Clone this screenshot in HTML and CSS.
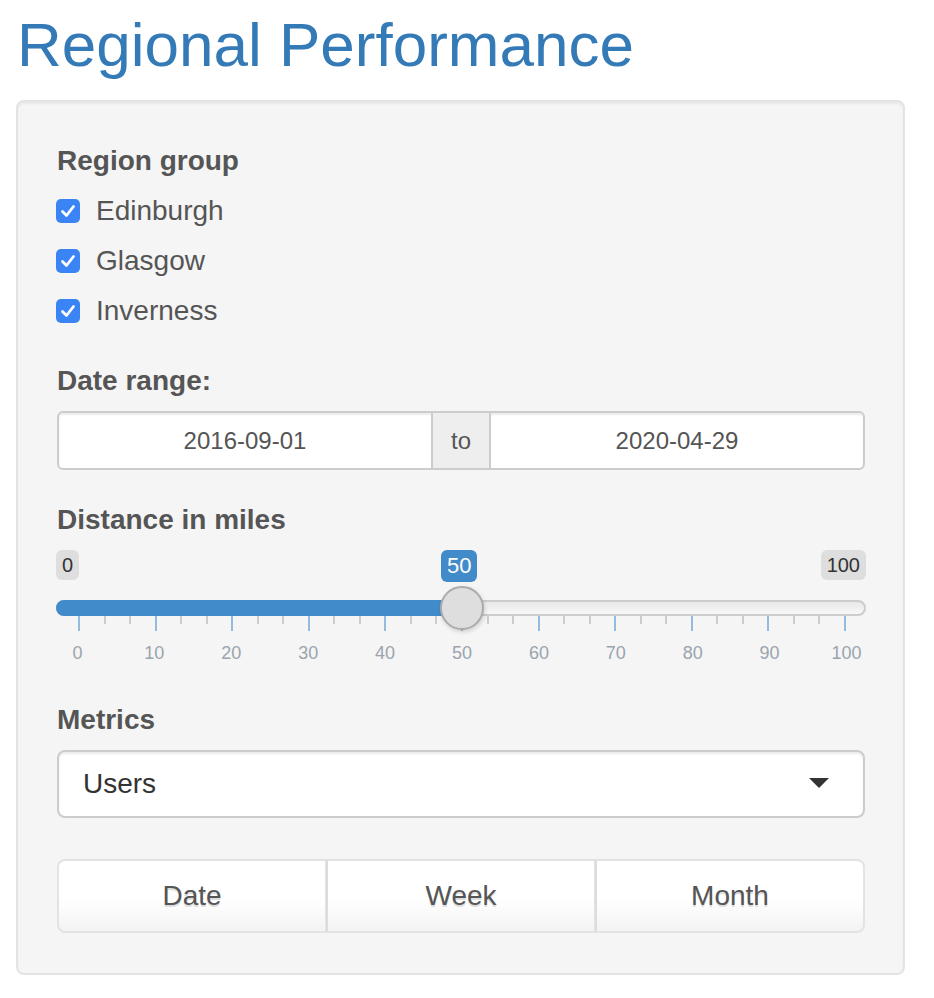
FILE: index.html
```html
<!DOCTYPE html>
<html>
<head>
<meta charset="utf-8">
<link rel="stylesheet" href="styles.css">
</head>
<body>
<div class="page">
  <h1 class="title">Regional Performance</h1>
  <div class="well">
    <div class="form-group">
      <label class="control-label">Region group</label>
      <div class="options">
        <div class="checkbox"><span class="box"><svg viewBox="0 0 24 24" width="24" height="24"><polyline points="6.5,12.5 10.5,16.5 17.5,7.5" fill="none" stroke="#fff" stroke-width="2.8" stroke-linecap="round" stroke-linejoin="round"/></svg></span><span class="opt">Edinburgh</span></div>
        <div class="checkbox"><span class="box"><svg viewBox="0 0 24 24" width="24" height="24"><polyline points="6.5,12.5 10.5,16.5 17.5,7.5" fill="none" stroke="#fff" stroke-width="2.8" stroke-linecap="round" stroke-linejoin="round"/></svg></span><span class="opt">Glasgow</span></div>
        <div class="checkbox"><span class="box"><svg viewBox="0 0 24 24" width="24" height="24"><polyline points="6.5,12.5 10.5,16.5 17.5,7.5" fill="none" stroke="#fff" stroke-width="2.8" stroke-linecap="round" stroke-linejoin="round"/></svg></span><span class="opt">Inverness</span></div>
      </div>
    </div>

    <div class="form-group">
      <label class="control-label">Date range:</label>
      <div class="daterange">
        <div class="date-input">2016-09-01</div>
        <div class="addon">to</div>
        <div class="date-input">2020-04-29</div>
      </div>
    </div>

    <div class="form-group">
      <label class="control-label">Distance in miles</label>
      <div class="slider">
        <div class="labels">
          <span class="irs-min">0</span>
          <span class="irs-max">100</span>
        </div>
        <div class="rail">
          <div class="line"></div>
          <div class="bar" style="width:405px"></div>
          <span class="irs-single" style="left:385px">50</span>
          <span class="handle" style="left:384px"></span>
        </div>
        <div class="grid">
          <div class="ticks">
            <span class="tick major"></span><span class="tick"></span><span class="tick"></span>
            <span class="tick major"></span><span class="tick"></span><span class="tick"></span>
            <span class="tick major"></span><span class="tick"></span><span class="tick"></span>
            <span class="tick major"></span><span class="tick"></span><span class="tick"></span>
            <span class="tick major"></span><span class="tick"></span><span class="tick"></span>
            <span class="tick major"></span><span class="tick"></span><span class="tick"></span>
            <span class="tick major"></span><span class="tick"></span><span class="tick"></span>
            <span class="tick major"></span><span class="tick"></span><span class="tick"></span>
            <span class="tick major"></span><span class="tick"></span><span class="tick"></span>
            <span class="tick major"></span><span class="tick"></span><span class="tick"></span>
            <span class="tick major"></span>
          </div>
          <div class="grid-text">
            <span>0</span><span>10</span><span>20</span><span>30</span><span>40</span><span>50</span><span>60</span><span>70</span><span>80</span><span>90</span><span>100</span>
          </div>
        </div>
      </div>
    </div>

    <div class="form-group metrics">
      <label class="control-label">Metrics</label>
      <div class="select">
        <span class="select-value">Users</span>
        <span class="caret"></span>
      </div>
    </div>

    <div class="btn-group">
      <button class="btn">Date</button>
      <button class="btn">Week</button>
      <button class="btn">Month</button>
    </div>
  </div>
</div>
</body>
</html>
```

FILE: styles.css
```css
* { box-sizing: border-box; }
html, body { margin: 0; padding: 0; background: #fff; }
body {
  font-family: "Liberation Sans", Arial, Helvetica, sans-serif;
  color: #555;
  font-size: 28px;
  line-height: 40px;
}
.page { padding: 0 29px 0 16px; }
.title {
  margin: 11px 0 21px 1px;
  font-size: 62px;
  line-height: 68px;
  font-weight: normal;
  color: #337ab7;
  letter-spacing: 0;
}
.well {
  background: #f5f5f5;
  border: 2px solid #e3e3e3;
  border-radius: 8px;
  box-shadow: inset 0 2px 2px rgba(0,0,0,0.05);
  padding: 39px 38px 40px 39px;
}
.form-group { margin-bottom: 30px; display: flex; flex-direction: column; }
.form-group.metrics { margin-bottom: 41px; }
.control-label {
  display: block;
  font-weight: bold;
  font-size: 28px;
  line-height: 40px;
  margin-bottom: 10px;
  color: #555;
}
.options { display: flex; flex-direction: column; gap: 10px; }
.checkbox { display: flex; align-items: center; height: 40px; }
.box {
  width: 24px; height: 24px;
  border-radius: 5px;
  background: #3b84f5;
  display: flex; align-items: center; justify-content: center;
  margin-left: -1px;
}
.box svg { display: block; }
.opt { margin-left: 16px; color: #555; }

.daterange {
  display: flex;
  height: 59px;
  border: 2px solid #ccc;
  border-radius: 6px;
  background: #fff;
  overflow: hidden;
  box-shadow: inset 0 2px 2px rgba(0,0,0,0.075);
}
.date-input {
  flex: 1;
  text-align: center;
  font-size: 24px;
  line-height: 55px;
  color: #555;
}
.addon {
  width: 60px;
  background: #eee;
  border-left: 2px solid #ccc;
  border-right: 2px solid #ccc;
  text-align: center;
  font-size: 24px;
  line-height: 55px;
  color: #555;
}

.slider { height: 120px; display: flex; flex-direction: column; }
.labels { display: flex; justify-content: space-between; height: 30px; margin: 0 -1px; }
.irs-min, .irs-max {
  background: #dedede;
  color: #333;
  font-size: 20px;
  line-height: 26px;
  padding: 2px 6px;
  border-radius: 6px;
  height: 30px;
}
.rail { position: relative; height: 16px; margin: 20px -1px 0 -1px; }
.line {
  height: 16px;
  border: 2px solid #ccc;
  border-radius: 8px;
  background: linear-gradient(#e8e8e8, #f8f8f8);
}
.bar {
  position: absolute; left: 0; top: 0;
  height: 16px;
  background: #428bca;
  border-radius: 8px 0 0 8px;
}
.handle {
  position: absolute;
  top: -14px;
  width: 44px; height: 44px;
  border-radius: 50%;
  background: #dedede;
  border: 2px solid #ababab;
  box-shadow: 1px 2px 4px rgba(0,0,0,0.15);
}
.irs-single {
  position: absolute;
  top: -50px;
  background: #428bca;
  color: #fff;
  font-size: 22px;
  line-height: 28px;
  padding: 2px 6px;
  border-radius: 6px;
}
.grid { padding: 0 20px 0 22px; }
.ticks { display: flex; justify-content: space-between; height: 16px; margin: 0 -1px; }
.tick { width: 2px; height: 8px; background: #ccc; }
.tick.major { height: 15px; background: #93bbdf; }
.grid-text {
  display: flex; justify-content: space-between;
  margin: 9px -40px 0 -40px;
  font-size: 18px;
  line-height: 24px;
  color: #9aa4ae;
}
.grid-text span { width: 80px; text-align: center; }

.select {
  height: 68px;
  border: 2px solid #ccc;
  border-radius: 8px;
  background: #fff;
  display: flex; align-items: center; justify-content: space-between;
  padding: 0 34px 0 24px;
  box-shadow: inset 0 2px 2px rgba(0,0,0,0.075);
}
.select-value { color: #333; font-size: 28px; }
.caret {
  width: 0; height: 0;
  border-left: 10px solid transparent;
  border-right: 10px solid transparent;
  border-top: 10px solid #333;
  margin-top: -2px;
}

.btn-group { display: flex; height: 74px; }
.btn {
  flex: 1;
  font-family: inherit;
  font-size: 28px;
  color: #555;
  background: linear-gradient(#fff 0%, #fff 55%, #f3f3f3 100%);
  border: 2px solid #e3e3e3;
  border-radius: 0;
  text-shadow: 0 2px 0 #ddd;
  margin: 0;
  padding: 0;
}
.btn + .btn { margin-left: -1px; border-left-color: #dcdcdc; }
.btn:first-child { border-radius: 8px 0 0 8px; }
.btn:last-child { border-radius: 0 8px 8px 0; }
```
